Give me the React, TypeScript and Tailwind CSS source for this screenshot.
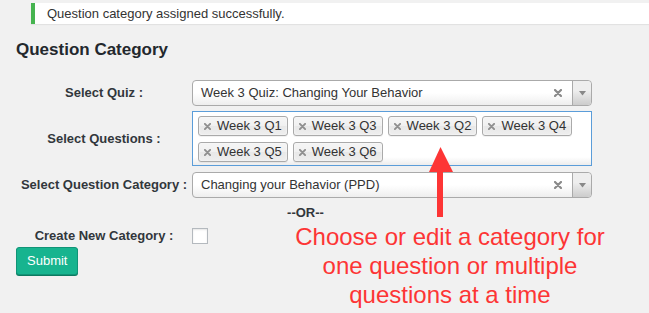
import { clsx } from 'clsx';

const FONT = "font-['Liberation_Sans',Arial,sans-serif]";

const TAGS = ['Week 3 Q1', 'Week 3 Q3', 'Week 3 Q2', 'Week 3 Q4', 'Week 3 Q5', 'Week 3 Q6'];

function ClearX({ size = 7, color = '#888' }: { size?: number; color?: string }) {
  return (
    <svg width={size} height={size} viewBox="0 0 8 8" className="shrink-0">
      <path d="M1 1 L7 7 M7 1 L1 7" stroke={color} strokeWidth="2.2" strokeLinecap="round" />
    </svg>
  );
}

function SingleSelect({ value }: { value: string }) {
  return (
    <div className="flex h-[26px] w-[400px] items-stretch rounded-[4px] border border-[#aaa] bg-[linear-gradient(to_top,#eee_0%,#fff_50%)]">
      <div className="flex flex-1 items-center truncate pl-2 text-[13px] text-[#333]">{value}</div>
      <div className="flex w-[28px] items-center justify-center">
        <ClearX size={8} color="#8a8a8a" />
      </div>
      <div className="flex w-[19px] items-center justify-center rounded-r-[4px] border-l border-[#aaa] bg-[linear-gradient(to_top,#ccc_0%,#eee_60%)]">
        <svg width="7" height="5" viewBox="0 0 7 5">
          <path d="M0 0 L7 0 L3.5 4.5 Z" fill="#888" />
        </svg>
      </div>
    </div>
  );
}

function Label({ children }: { children: React.ReactNode }) {
  return <div className="w-[176px] shrink-0 text-center text-[13px] font-bold text-[#32373c]">{children}</div>;
}

export default function App() {
  return (
    <div className={clsx(FONT, 'relative h-[313px] w-[649px] overflow-hidden bg-[#f1f1f1]')}>
      <div className="ml-[31px] mt-[3px] flex h-[21px] items-center border-l-4 border-[#46b450] bg-white pl-3 text-[13px] text-[#333] shadow-[0_1px_1px_rgba(0,0,0,0.06)]">
        Question category assigned successfully.
      </div>

      <h1 className="ml-4 mt-4 text-[17px] font-bold leading-5 text-[#23282d]">Question Category</h1>

      <div className="ml-4 mt-5 w-[579px]">
        <div className="flex items-center">
          <Label>Select Quiz :</Label>
          <SingleSelect value="Week 3 Quiz: Changing Your Behavior" />
        </div>

        <div className="mt-[5px] flex items-center">
          <Label>Select Questions :</Label>
          <div className="flex h-[55px] w-[400px] flex-wrap content-start border border-[#5b9dd9] bg-[linear-gradient(to_bottom,#fff_85%,#eee_99%)] pt-px">
            {TAGS.map((t) => (
              <div
                key={t}
                className="mb-[3px] ml-[5px] mt-[3px] flex h-[20px] items-center rounded-[3px] border border-[#aaa] bg-[linear-gradient(to_bottom,#f4f4f4_20%,#f0f0f0_50%,#e8e8e8_52%,#eee_100%)] pl-[5px] pr-[5px] text-[13px] text-[#333] shadow-[inset_0_0_2px_#fff,0_1px_0_rgba(0,0,0,0.05)]"
              >
                <span className="mr-[6px] flex w-[7px] justify-center">
                  <ClearX size={7} color="#8f8f8f" />
                </span>
                {t}
              </div>
            ))}
          </div>
        </div>

        <div className="mt-[6px] flex items-center">
          <Label>Select Question Category :</Label>
          <SingleSelect value="Changing your Behavior (PPD)" />
        </div>

        <div className="flex h-[29px] items-center justify-center text-[13px] font-bold text-[#32373c]">--OR--</div>

        <div className="flex h-[18px] items-center">
          <Label>Create New Category :</Label>
          <div className="h-4 w-4 border border-[#b4b9be] bg-white shadow-[inset_0_1px_2px_rgba(0,0,0,0.1)]" />
        </div>
      </div>

      <button
        type="button"
        className="ml-4 mt-[2px] h-[28px] rounded-[3px] border border-[#119477] bg-[#17b48f] px-[10px] text-[13px] text-white shadow-[0_1px_0_#0c7a60]"
      >
        Submit
      </button>

      <svg className="absolute left-[425px] top-[145px]" width="32" height="75" viewBox="0 0 32 75">
        <polygon points="15.5,2 4,27 28,27" fill="#fd3535" />
        <rect x="12" y="26" width="6" height="46" fill="#fd3535" />
      </svg>

      <div className="absolute left-[290px] top-[222px] w-[320px] text-center text-[24px] leading-[29px] text-[#fd3535]">
        Choose or edit a category for
        <br />
        one question or multiple
        <br />
        questions at a time
      </div>
    </div>
  );
}
